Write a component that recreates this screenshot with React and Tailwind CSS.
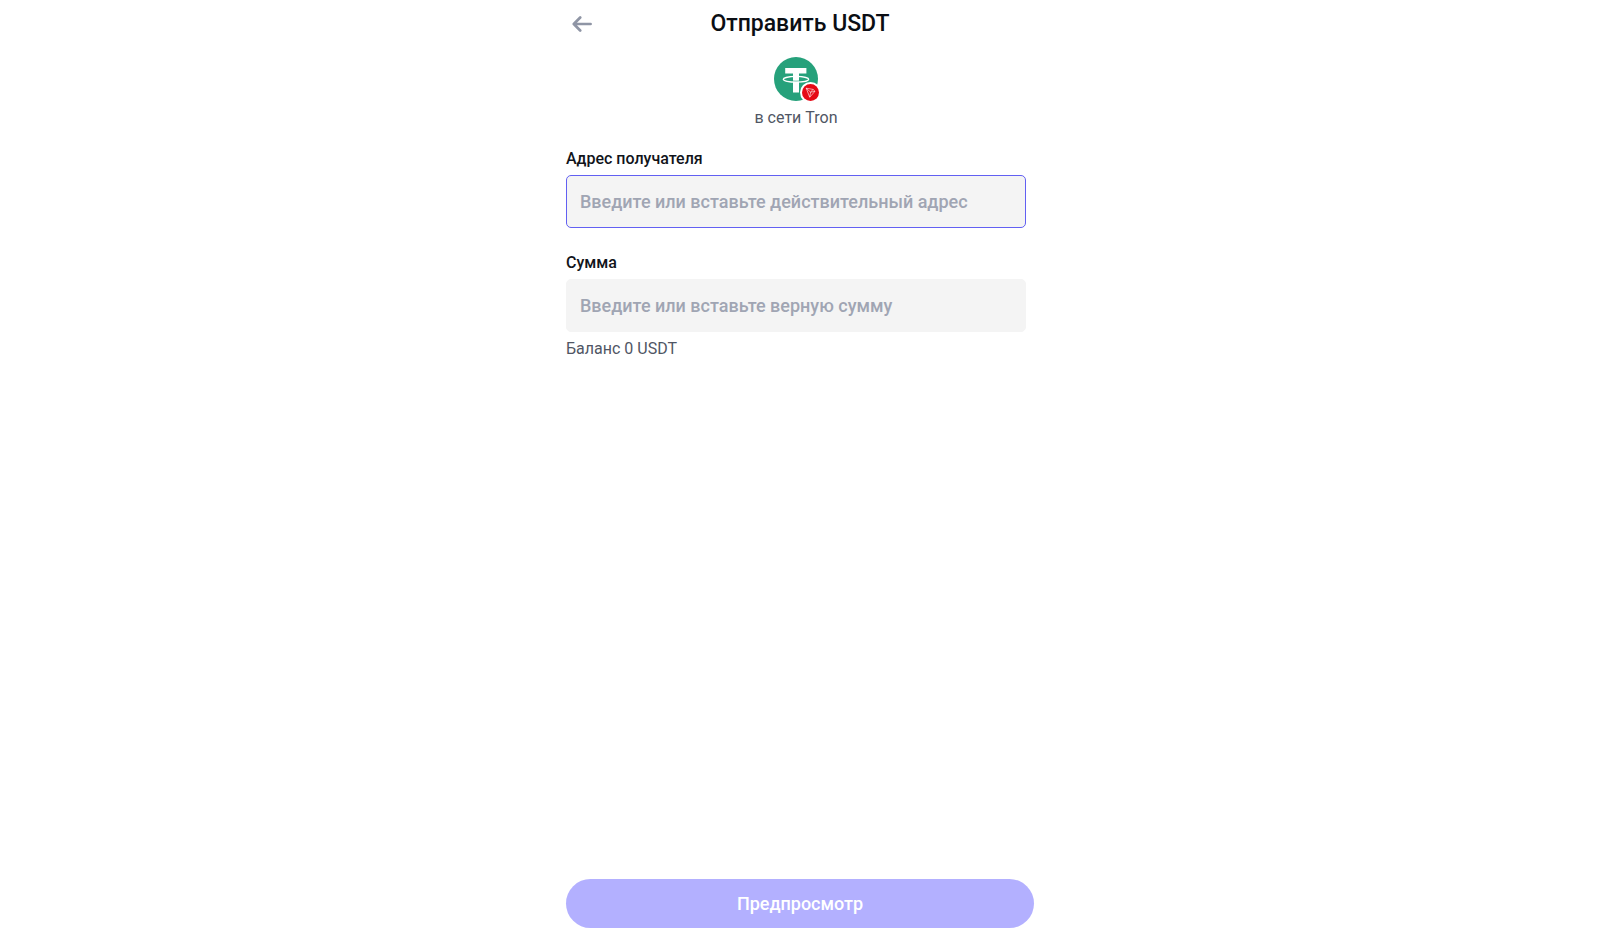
import { useState } from "react";

function BackArrow() {
  return (
    <svg className="w-5 h-4" viewBox="0 0 20 16" fill="none" stroke="#8f95a5" strokeWidth="2.7" strokeLinecap="round" strokeLinejoin="round">
      <path d="M8.2 1.5L1.8 8L8.2 14.5M2 8H18.6" />
    </svg>
  );
}

function TetherLogo() {
  return (
    <svg className="w-11 h-11" viewBox="0 0 44 44" aria-hidden="true">
      <circle cx="22" cy="22" r="22" fill="#26a17b" />
      <path d="M11.2 10.9H32.4V16.6H25V35.6H19V16.6H11.2Z" fill="#fff" />
      <ellipse cx="22" cy="22.3" rx="12.7" ry="2.9" fill="none" stroke="#fff" strokeWidth="1.3" />
      <path d="M19 23.9Q22 24.3 25 23.9" fill="none" stroke="#26a17b" strokeWidth="0.6" />
    </svg>
  );
}

function TronBadge() {
  return (
    <svg className="w-[21px] h-[21px]" viewBox="0 0 21 21" aria-hidden="true">
      <circle cx="10.5" cy="10.5" r="10.5" fill="#fff" />
      <circle cx="10.5" cy="10.5" r="8.5" fill="#e50915" />
      <path
        d="M6.2 6.2L13 7.4L15 9.3L9.7 15.2ZM6.2 6.2L10.6 10.2L9.7 15.2M10.6 10.2L13 7.4M10.6 10.2L15 9.3"
        fill="none"
        stroke="#fff"
        strokeOpacity="0.85"
        strokeWidth="0.7"
        strokeLinejoin="round"
      />
    </svg>
  );
}

function Field({ id, label, placeholder, value, onChange, active }) {
  return (
    <div className="flex flex-col">
      <label htmlFor={id} className="text-base leading-6 mb-1 font-medium text-[#11141a]">
        {label}
      </label>
      <input
        id={id}
        type="text"
        autoComplete="off"
        placeholder={placeholder}
        value={value}
        onChange={(e) => onChange(e.target.value)}
        className={`
          w-full h-[53px] px-[13px] rounded-[5px] border bg-[#f4f4f4] outline-none
          text-lg font-medium text-[#11141a] placeholder:text-[#a0a5b3] focus:border-[#6260f2]
          ${active ? "border-[#6260f2]" : "border-[#f4f4f4]"}
        `}
      />
    </div>
  );
}

function App() {
  const [address, setAddress] = useState("");
  const [amount, setAmount] = useState("");
  const canPreview = address !== "" && Number(amount) > 0;

  return (
    <div className="min-h-screen flex justify-center bg-white font-['Roboto','Noto_Sans',sans-serif]">
      <div className="w-full max-w-[468px] flex flex-col pb-2">
        <header className="grid grid-cols-[32px_1fr_32px] items-center h-12">
          <button type="button" aria-label="Назад" className="flex justify-center cursor-pointer">
            <BackArrow />
          </button>
          <h1 className="text-center text-[23px] leading-7 font-medium text-[#0b0e14]">Отправить USDT</h1>
        </header>

        <main className="flex-1 flex flex-col pr-2 pt-[9px]">
          <div className="flex flex-col items-center">
            <div className="relative">
              <TetherLogo />
              <div className="absolute -right-[3px] -bottom-0.5">
                <TronBadge />
              </div>
            </div>
            <p className="mt-[5px] text-base leading-6 text-[#505664]">в сети Tron</p>
          </div>

          <div className="mt-[17px] flex flex-col gap-[23px]">
            <Field
              id="address"
              label="Адрес получателя"
              placeholder="Введите или вставьте действительный адрес"
              value={address}
              onChange={setAddress}
              active
            />
            <Field
              id="amount"
              label="Сумма"
              placeholder="Введите или вставьте верную сумму"
              value={amount}
              onChange={setAmount}
            />
          </div>
          <p className="mt-[5px] text-base leading-6 text-[#505664]">Баланс 0 USDT</p>
        </main>

        <button
          type="button"
          disabled={!canPreview}
          className="w-full h-[49px] rounded-full bg-[#6260f2] disabled:bg-[#b3b0ff] text-white text-lg font-medium"
        >
          Предпросмотр
        </button>
      </div>
    </div>
  );
}

export default App;
